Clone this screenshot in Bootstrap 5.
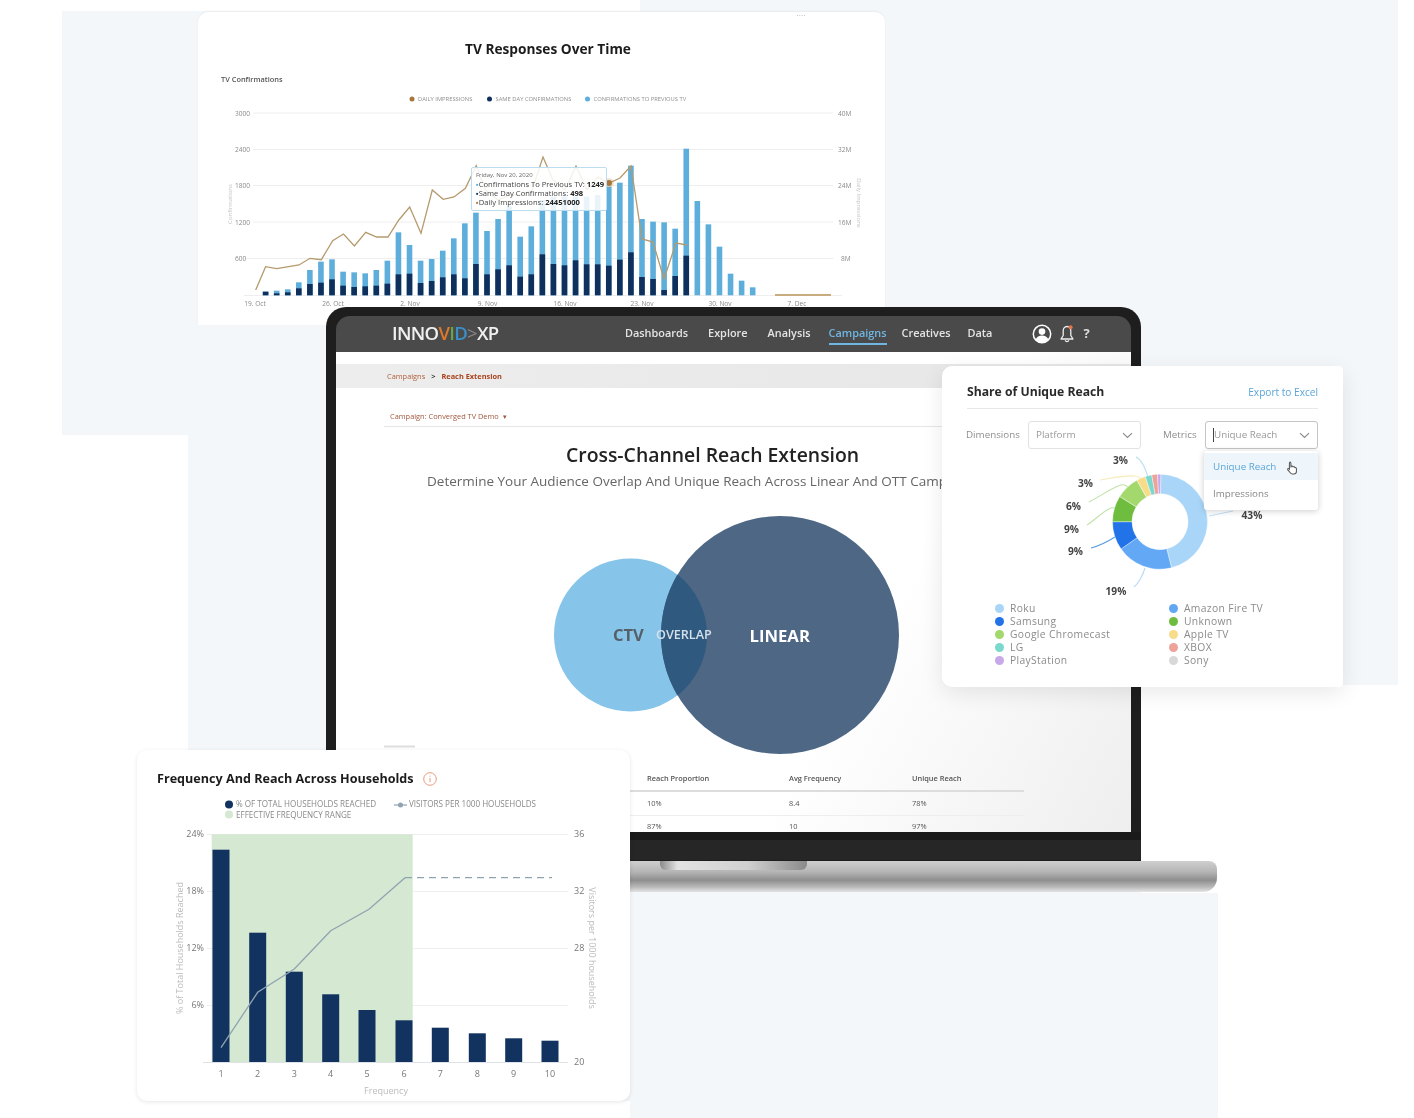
<!DOCTYPE html>
<html lang="en">
<head>
  <meta charset="UTF-8">
  <title>Innovid XP</title>
  <link href="https://cdn.jsdelivr.net/npm/bootstrap@5.3.0/dist/css/bootstrap.min.css" rel="stylesheet">
  <style>
    body { background: #fff; font-family: "Open Sans", "Liberation Sans", sans-serif; overflow: hidden; }
    .stage { position: relative; width: 1414px; height: 1118px; filter: blur(.6px); }
    .backdrop {
      position: absolute; inset: 0; background: #f3f7fa;
      clip-path: polygon(62px 11px, 640px 11px, 640px 0, 1398px 0, 1398px 685px, 1141px 685px, 1141px 893px, 1218px 893px, 1218px 1118px, 630px 1118px, 630px 1101px, 188px 1101px, 188px 435px, 62px 435px);
    }

    /* TV chart card */
    .tv-card { position: absolute; left: 198px; top: 12px; width: 687px; height: 313px; background: #fff; border-radius: 10px 10px 0 0; box-shadow: 0 -1px 2px rgba(0,0,0,.05); }
    .tv-title { padding: 28px 0 0 13px; font-size: 13.7px; line-height: 18px; font-weight: 700; color: #1c1c1c; text-align: center; margin: 0; }
    .tv-sub { margin: 15px 0 5px 23px; font-size: 7.4px; line-height: 12px; font-weight: 600; color: #555; }
    .tv-dots { position: absolute; right: 79px; top: 0; font-size: 7px; line-height: 8px; color: #999; letter-spacing: .5px; }
    .tv-tip { position: absolute; left: 273px; top: 155px; width: 136px; height: 44px; padding: 4px 4px; background: rgba(255,255,255,.86); border: 1px solid #bcdcef; border-radius: 2px; font-size: 7.6px; line-height: 8.9px; color: #444; white-space: nowrap; }
    .tv-tip small { display: block; font-size: 6px; line-height: 7px; color: #666; margin-bottom: 1px; }
    .tv-tip b { font-weight: 700; color: #222; }
    .mk-a { color: #5eaedc; } .mk-b { color: #0f2f5c; } .mk-c { color: #a8763a; }

    /* laptop */
    .lap-body { position: absolute; left: 326px; top: 307px; width: 815px; height: 554px; padding: 9px 10px 0; background: #1e1e1e; border-radius: 20px 20px 0 0; }
    .lap-head { height: 36px; padding-left: 56px; background: #4a4a4a; border-radius: 14px 14px 0 0; color: #e4e4e4; }
    .lap-logo { width: 233px; padding-bottom: 3px; font-size: 18.5px; font-weight: 600; letter-spacing: -.7px; color: #f0f0f0; }
    .lap-logo .v1 { color: #e0782a; } .lap-logo .v2 { color: #63a845; } .lap-logo .v3 { color: #3a8fc9; } .lap-logo .v4 { color: #8a8a8a; font-weight: 400; }
    .lap-nav { font-size: 10.9px; font-weight: 600; }
    .lap-nav span { display: block; padding: 0 0 2px; margin-right: 20px; line-height: 16px; }
    .lap-nav .on { margin-right: 15px; color: #6fb6e2; border-bottom: 2px solid #6fb6e2; margin-top: 2px; }
    .lap-nav .gap2 { margin-right: 18px; }
    .lap-nav .gap3 { margin-right: 17px; }
    .lap-icons { margin-left: 40px; gap: 7px; }
    .lap-help { margin-left: 1px; padding-bottom: 2px; font-size: 13px; font-weight: 700; line-height: 16px; color: #ddd; }
    .lap-screen { height: 480px; overflow: hidden; background: linear-gradient(120deg, #fff 65%, #eee 100%); padding-top: 12px; }
    .lap-band { height: 24px; padding: 2px 0 0 51px; background: linear-gradient(90deg, #ededed, #e6e6e6); font-size: 7.4px; color: #b0603c; }
    .lap-band b { color: #a8421c; font-weight: 700; }
    .lap-band i { font-style: normal; margin: 0 6px; color: #333; font-weight: 700; }
    .lap-camp { margin: 23px 0 0 48px; padding: 0 0 4px 6px; width: 560px; border-bottom: 1px solid #e4e6e8; font-size: 7.4px; line-height: 11px; color: #a0583c; }
    .lap-title { margin: 16px 0 0; padding-left: 230px; font-size: 19.4px; line-height: 24px; font-weight: 600; color: #222; }
    .lap-lead { margin: 4px 0 0; padding-left: 91px; font-size: 13.5px; line-height: 20px; color: #666; white-space: nowrap; }
    .venn { display: block; margin-top: 24px; }
    .venn text { font-weight: 700; }
    .venn-a { font-size: 16.5px; fill: #565f68; }
    .venn-b { font-size: 12.6px; fill: #d4e0ea; font-weight: 600 !important; }
    .venn-c { font-size: 16.7px; fill: #fff; }
    .lap-table { width: 640px; margin: 13px 0 0 48px; table-layout: fixed; font-size: 7.4px; color: #555; }
    .lap-table th, .lap-table td { padding: 0; height: 24px; background: transparent; color: #555; font-weight: 600; vertical-align: middle; }
    .lap-table th { border-bottom: 2px solid #ddd; height: 23px; }
    .lap-table td { border-bottom: 1px solid #eee; font-weight: 400; }
    .lap-chin { height: 28px; margin: 0 -10px; border-top: 8px solid #1a1a1a; background: #262626; }
    .lap-base { position: absolute; left: 249px; top: 861px; width: 968px; height: 31px; border-radius: 3px 8px 14px 14px; background: linear-gradient(180deg, #cfcfcf 0, #b5b5b5 35%, #8e8e8e 62%, #bcbcbc 85%, #e4e4e4 100%); }
    .lap-notch { width: 147px; height: 9px; margin: 0 auto; border-radius: 0 0 6px 6px; background: linear-gradient(90deg, #8a8a8a, #e2e2e2 12%, #d0d0d0 60%, #8a8a8a); }

    /* share of reach card */
    .share-card { position: absolute; left: 942px; top: 366px; width: 401px; height: 321px; padding: 17px 25px 0; background: #fff; border-radius: 10px 4px 4px 10px; box-shadow: 0 6px 22px rgba(0,0,0,.09); }
    .share-top { height: 26px; border-bottom: 1px solid #e8e8e8; }
    .share-title { font-size: 12.2px; font-weight: 700; color: #2a2a2a; }
    .share-link { margin-top: 2px; font-size: 10.1px; color: #5aa5d8; }
    .share-row { margin-top: 12px; font-size: 9.8px; color: #8e8e8e; }
    .share-lab { width: 62px; margin-left: -1px; }
    .share-lab2 { width: 42px; margin-left: 22px; }
    .pick { position: relative; width: 113px; height: 28px; padding: 0 7px; border: 1px solid #e2e2e2; border-radius: 3px; color: #999; }
    .pick-on { border-color: #c4c4c4; }
    .pick-caret { width: 1px; height: 14px; background: #444; }
    .pick-menu { left: -2px; top: 29px; width: 114px; min-width: 0; padding: 2px 0 3px; border: 0; border-radius: 3px; box-shadow: 0 1px 6px rgba(0,0,0,.2); font-size: 9.8px; margin: 0; }
    .pick-menu .dropdown-item { height: 27px; padding: 0 9px; line-height: 27px; color: #888; }
    .pick-menu .item-on { background: #eef6fc; color: #5aa5d8; position: relative; }
    .pick-hand { position: absolute; left: 81px; top: 7px; }
    .donut { display: block; margin: 2px -25px 0; }
    .donut text { font-size: 10.2px; font-weight: 700; fill: #444; }
    .share-keys { display: grid; grid-template-columns: 174px 174px; margin: 2px 0 0 28px; font-size: 10.3px; line-height: 13px; letter-spacing: .35px; color: #8b8b8b; }
    .share-keys span::before { content: ""; display: inline-block; width: 9px; height: 9px; margin-right: 6px; border-radius: 50%; background: var(--dot); vertical-align: -1px; }

    /* frequency card */
    .freq-card { position: absolute; left: 137px; top: 750px; width: 493px; height: 351px; padding: 20px 20px 0; background: #fff; border-radius: 10px; box-shadow: 0 1px 4px rgba(0,0,0,.1); }
    .freq-title { font-size: 12.6px; line-height: 18px; font-weight: 700; color: #1c1c1c; gap: 9px; margin: 0; }
    .freq-chart { display: block; margin: 5px -20px 0; }

    .t-tick { font-size: 6.6px; fill: #8a8a8a; }
    .t-key { font-size: 5.8px; fill: #909090; }
    .t-axis { font-size: 6px; fill: #c4c4c4; }
    .f-tick { font-size: 9px; fill: #777; }
    .f-key { font-size: 8.1px; fill: #8a8a8a; }
    .f-axis { font-size: 9px; fill: #bbb; }
  </style>
</head>
<body>
<div class="stage">
  <div class="backdrop"></div>

  <!-- TV responses -->
  <div class="tv-card">
    <span class="tv-dots">····</span>
    <h2 class="tv-title">TV Responses Over Time</h2>
    <p class="tv-sub">TV Confirmations</p>
    <svg id="tvChart" width="687" height="225" viewBox="198 90 687 225">
      <circle cx="412" cy="99" r="2.5" fill="#a8763a"/><text class="t-key" x="418" y="101">DAILY IMPRESSIONS</text>
      <circle cx="489.5" cy="99" r="2.5" fill="#0f2f5c"/><text class="t-key" x="495.5" y="101">SAME DAY CONFIRMATIONS</text>
      <circle cx="587.5" cy="99" r="2.5" fill="#5eaedc"/><text class="t-key" x="593.5" y="101">CONFIRMATIONS TO PREVIOUS TV</text>
      <g stroke="#eee" stroke-width="1">
        <line x1="253" x2="833" y1="113" y2="113"/><line x1="253" x2="833" y1="149.5" y2="149.5"/>
        <line x1="253" x2="833" y1="185.5" y2="185.5"/><line x1="253" x2="833" y1="222" y2="222"/>
        <line x1="245" x2="833" y1="258.5" y2="258.5"/><line x1="244" x2="842" y1="295.5" y2="295.5"/>
      </g>
      <text class="t-tick" x="235" y="115.5">3000</text><text class="t-tick" x="235" y="152">2400</text>
      <text class="t-tick" x="235" y="188">1800</text><text class="t-tick" x="235" y="224.5">1200</text>
      <text class="t-tick" x="235" y="261">600</text>
      <text class="t-tick" x="838" y="115.5">40M</text><text class="t-tick" x="838" y="152">32M</text>
      <text class="t-tick" x="838" y="188">24M</text><text class="t-tick" x="838" y="224.5">16M</text>
      <text class="t-tick" x="841" y="261">8M</text>
      <text class="t-tick" text-anchor="middle" x="255" y="306">19. Oct</text><text class="t-tick" text-anchor="middle" x="333" y="306">26. Oct</text>
      <text class="t-tick" text-anchor="middle" x="410" y="306">2. Nov</text><text class="t-tick" text-anchor="middle" x="487.5" y="306">9. Nov</text>
      <text class="t-tick" text-anchor="middle" x="565" y="306">16. Nov</text><text class="t-tick" text-anchor="middle" x="642" y="306">23. Nov</text>
      <text class="t-tick" text-anchor="middle" x="720" y="306">30. Nov</text><text class="t-tick" text-anchor="middle" x="797" y="306">7. Dec</text>
      <text class="t-axis" text-anchor="middle" transform="translate(232 204) rotate(-90)">Confirmations</text>
      <text class="t-axis" text-anchor="middle" transform="translate(857 203) rotate(90)">Daily Impressions</text>
      <line x1="775" x2="831" y1="295" y2="295" stroke="#c9ab80" stroke-width="2"/>
    </svg>
    <div class="tv-tip">
      <small>Friday, Nov 20, 2020</small>
      <div><span class="mk-a">▪</span>Confirmations To Previous TV: <b>1249</b></div>
      <div><span class="mk-b">▪</span>Same Day Confirmations: <b>498</b></div>
      <div><span class="mk-c">▪</span>Daily Impressions: <b>24451000</b></div>
    </div>
  </div>

  <!-- laptop -->
  <div class="lap-base"><div class="lap-notch"></div></div>
  <div class="lap-body">
    <div class="lap-head d-flex align-items-center">
      <div class="lap-logo">INNO<span class="v1">V</span><span class="v2">I</span><span class="v3">D</span><span class="v4">&gt;</span>XP</div>
      <div class="lap-nav d-flex align-items-center">
        <span>Dashboards</span><span>Explore</span><span class="gap2">Analysis</span><span class="on">Campaigns</span><span class="gap3">Creatives</span><span class="m-0">Data</span>
      </div>
      <div class="lap-icons d-flex align-items-center">
        <svg class="d-block" width="20" height="20" viewBox="0 0 20 20"><circle cx="10" cy="10" r="8.7" fill="none" stroke="#fff" stroke-width="1.5"/><circle cx="10" cy="7.6" r="3.3" fill="#fff"/><path d="M3.6 15.6c1-3 3.6-4.2 6.4-4.2s5.400 1.200 6.400 4.200A8.700 8.700 0 0 1 10 18.700a8.700 8.700 0 0 1-6.400-3.100z" fill="#fff"/></svg>
        <svg class="d-block" width="16" height="20" viewBox="0 0 16 20"><path d="M8 2.500c-2.600 0-3.800 2-3.800 4.400v4.600L2 15h12l-2.200-3.500V6.900C11.800 4.500 10.600 2.500 8 2.500z" fill="none" stroke="#eee" stroke-width="1.300" stroke-linejoin="round"/><path d="M6.200 16.300a1.900 1.900 0 0 0 3.600 0" fill="none" stroke="#eee" stroke-width="1.300"/><circle cx="11.600" cy="3.300" r="2" fill="#e8744a"/></svg>
        <span class="lap-help">?</span>
      </div>
    </div>
    <div class="lap-screen">
      <div class="lap-band d-flex align-items-center"><span>Campaigns</span><i>&gt;</i><b>Reach Extension</b></div>
      <div class="lap-camp">Campaign: Converged TV Demo &nbsp;▾</div>
      <h1 class="lap-title">Cross-Channel Reach Extension</h1>
      <p class="lap-lead">Determine Your Audience Overlap And Unique Reach Across Linear And OTT Campaigns</p>
      <svg class="venn" width="794" height="240" viewBox="336 515 794 240">
        <line x1="384" x2="415" y1="746.500" y2="746.500" stroke="#ddd" stroke-width="2"/>
        <circle cx="630.500" cy="635" r="76.500" fill="#86c5e9"/>
        <circle cx="780" cy="635" r="119" fill="#4d6785"/>
        <path d="M677.460 574.600A76.500 76.500 0 0 1 677.460 695.400A119 119 0 0 1 677.460 574.600z" fill="#30597f"/>
        <text class="venn-a" x="613" y="641">CTV</text>
        <text class="venn-b" x="656" y="638.500">OVERLAP</text>
        <text class="venn-c" x="749.500" y="641.500">LINEAR</text>
      </svg>
      <table class="table lap-table mb-0">
        <colgroup><col style="width:263px"><col style="width:142px"><col style="width:123px"><col></colgroup>
        <thead><tr><th></th><th>Reach Proportion</th><th>Avg Frequency</th><th>Unique Reach</th></tr></thead>
        <tbody>
          <tr><td></td><td>10%</td><td>8.4</td><td>78%</td></tr>
          <tr><td></td><td>87%</td><td>10</td><td>97%</td></tr>
        </tbody>
      </table>
    </div>
    <div class="lap-chin"></div>
  </div>

  <!-- share of unique reach -->
  <div class="share-card">
    <div class="share-top d-flex justify-content-between align-items-start">
      <span class="share-title">Share of Unique Reach</span>
      <span class="share-link">Export to Excel</span>
    </div>
    <div class="share-row d-flex align-items-center">
      <span class="share-lab">Dimensions</span>
      <div class="pick d-flex align-items-center justify-content-between">
        <span>Platform</span>
        <svg width="11" height="7" viewBox="0 0 11 7"><path d="M1 1.200l4.500 4.300 4.500-4.300" fill="none" stroke="#888" stroke-width="1.100"/></svg>
      </div>
      <span class="share-lab2">Metrics</span>
      <div class="pick pick-on d-flex align-items-center justify-content-between">
        <span class="d-flex align-items-center"><span class="pick-caret"></span>Unique Reach</span>
        <svg width="11" height="7" viewBox="0 0 11 7"><path d="M1 1.200l4.500 4.300 4.500-4.300" fill="none" stroke="#888" stroke-width="1.100"/></svg>
        <div class="dropdown-menu show pick-menu">
          <div class="dropdown-item item-on">Unique Reach
            <svg class="pick-hand" width="15" height="17" viewBox="0 0 16 17"><path d="M5 1.500c.8 0 1.300.6 1.300 1.300V7h.2v-.6c0-.6 1.900-.7 2 .1v.6c.2-.7 1.900-.6 2 .2v.6c.3-.6 1.700-.4 1.700.5v3c0 1.800-1 3-2.800 3H8c-1.300 0-1.900-.6-2.600-1.600L3 10c-.7-1 .5-1.900 1.300-1.200l.4.4V2.800c0-.7.5-1.300 1.300-1.300z" fill="#fff" stroke="#555" stroke-width="1.100"/></svg>
          </div>
          <div class="dropdown-item">Impressions</div>
        </div>
      </div>
    </div>
    <svg id="donut" class="donut" width="401" height="149" viewBox="942 451 401 149">
      <g fill="none" stroke-width="1.100">
        <path d="M1136 457c6 3 9 11 12 20" stroke="#b7def0"/>
        <path d="M1100 480c12-2 24-5 35-4 4 0 6 3 7 6" stroke="#f7eab8"/>
        <path d="M1089 502c10-5 22-14 32-17 4-1 6 1 7 3" stroke="#bfe2a6"/>
        <path d="M1087 525c8-5 16-14 24-17 3-1 4 0 6 1" stroke="#bfe2a6"/>
        <path d="M1091 548c8-2 16-6 24-11" stroke="#5a9ce0"/>
        <path d="M1134 587c4-3 9-12 11-19" stroke="#b7d8f4"/>
        <path d="M1209 516l24-5" stroke="#c4e2f8"/>
      </g>
      <text x="1113" y="464">3%</text><text x="1078" y="487">3%</text><text x="1066" y="510">6%</text>
      <text x="1064" y="533">9%</text><text x="1068" y="555">9%</text><text x="1105.500" y="595">19%</text><text x="1241.500" y="519">43%</text>
    </svg>
    <div class="share-keys">
      <span style="--dot:#a9d6f8">Roku</span><span style="--dot:#62a8f0">Amazon Fire TV</span>
      <span style="--dot:#2272e8">Samsung</span><span style="--dot:#6fbd3e">Unknown</span>
      <span style="--dot:#a2d86c">Google Chromecast</span><span style="--dot:#f7dc8a">Apple TV</span>
      <span style="--dot:#7ad8cd">LG</span><span style="--dot:#eda29a">XBOX</span>
      <span style="--dot:#c8a8e8">PlayStation</span><span style="--dot:#d8d8d8">Sony</span>
    </div>
  </div>

  <!-- frequency and reach -->
  <div class="freq-card">
    <h3 class="freq-title d-flex align-items-center">Frequency And Reach Across Households
      <svg width="14" height="14" viewBox="0 0 14 14"><circle cx="7" cy="7" r="6.300" fill="none" stroke="#e89a7c" stroke-width="1"/><path d="M7 6v4.200M7 3.700v1" stroke="#e89a7c" stroke-width="1"/></svg>
    </h3>
    <svg id="freqChart" class="freq-chart" width="493" height="308" viewBox="137 793 493 308">
      <circle cx="229" cy="804.500" r="4" fill="#12335f"/><text class="f-key" x="236" y="807">% OF TOTAL HOUSEHOLDS REACHED</text>
      <line x1="394" x2="407" y1="805" y2="805" stroke="#8fa3b0" stroke-width="1.200"/><circle cx="400.500" cy="805" r="2.500" fill="#8fa3b0"/><text class="f-key" x="409" y="807">VISITORS PER 1000 HOUSEHOLDS</text>
      <circle cx="229" cy="814.500" r="4" fill="#d5e8d2"/><text class="f-key" x="236" y="817.500">EFFECTIVE FREQUENCY RANGE</text>
      <g stroke="#eee" stroke-width="1">
        <line x1="207" x2="568" y1="834.500" y2="834.500"/><line x1="207" x2="568" y1="891.500" y2="891.500"/>
        <line x1="207" x2="568" y1="948.500" y2="948.500"/><line x1="207" x2="568" y1="1005.500" y2="1005.500"/>
      </g>
      <rect x="211.700" y="834.300" width="201" height="228" fill="#d5e8d2"/>
      <line x1="203" x2="568" y1="1062.500" y2="1062.500" stroke="#dfe3e8"/>
      <text class="f-tick" text-anchor="end" x="204" y="837">24%</text><text class="f-tick" text-anchor="end" x="204" y="894">18%</text>
      <text class="f-tick" text-anchor="end" x="204" y="951">12%</text><text class="f-tick" text-anchor="end" x="204" y="1008">6%</text>
      <text class="f-tick" x="574" y="837">36</text><text class="f-tick" x="574" y="894">32</text>
      <text class="f-tick" x="574" y="951">28</text><text class="f-tick" x="574" y="1065">20</text>
      <text class="f-axis" text-anchor="middle" x="386" y="1094">Frequency</text>
      <text class="f-axis" text-anchor="middle" transform="translate(183 948) rotate(-90)">% of Total Households Reached</text>
      <text class="f-axis" text-anchor="middle" transform="translate(589 948) rotate(90)">Visitors per 1000 households</text>
    </svg>
  </div>
</div>

<script src="https://cdn.jsdelivr.net/npm/bootstrap@5.3.0/dist/js/bootstrap.bundle.min.js"></script>
<script>
  const NS = "http://www.w3.org/2000/svg";
  function add(svg, tag, attrs, text) {
    const el = document.createElementNS(NS, tag);
    for (const k in attrs) el.setAttribute(k, attrs[k]);
    if (text !== undefined) el.textContent = text;
    svg.appendChild(el);
    return el;
  }

  // TV chart: [total top, dark top] read off the chart, y in page px x3
  const tvBars = [[875,875],[872,880],[868,877],[847,865],[810,852],[785,848],[778,838],[815,857],[817,861],[820,859],[810,857],[782,851],[697,823],[735,821],[782,849],[777,843],[752,832],[715,823],[670,835],[638,792],[693,823],[657,808],[620,796],[710,830],[679,823],[600,763],[590,792],[590,796],[590,781],[590,793],[585,793],[560,797],[548,779],[497,757],[657,831],[665,837],[667,870],[686,828],[446,767],[603,886],[673,886],[740,886],[821,886],[842,886],[862,886]];
  const tv = document.getElementById("tvChart");
  tvBars.forEach(function (b, i) {
    const x = 262.800 + 11.070 * i, top = b[0] / 3, mid = b[1] / 3;
    add(tv, "rect", { x: x, y: top, width: 5.600, height: 295.300 - top, fill: "#5eaedc" });
    add(tv, "rect", { x: x, y: mid, width: 5.600, height: 295.300 - mid, fill: "#0f2f5c" });
  });
  const tvLine = [[255.700,290],[265.600,266.700],[276.700,268.700],[288.700,266.700],[299,265],[310,258.300],[321.300,259.700],[332.700,240.700],[343.500,234],[354.400,246],[365.700,232.300],[376.600,237],[388,237],[398.800,220],[409.700,207],[421,233.300],[432.300,190],[443.200,199.300],[454,197],[465.400,188.300],[476.200,165.700],[485.600,190],[498,200],[510,195],[520,195],[532,190],[543,157],[553,180],[565,190],[576,166],[587,190],[598,177],[609,183],[620,178],[631,166],[642,239],[653,242],[664,279],[676,243],[687,245]];
  add(tv, "polyline", { points: tvLine.join(" "), fill: "none", stroke: "#b59a6d", "stroke-width": 1.300 });
  add(tv, "circle", { cx: 609, cy: 183, r: 5, fill: "#a8763a", opacity: .2 });
  add(tv, "circle", { cx: 609, cy: 183, r: 3, fill: "#a8763a" });

  // donut
  const donut = document.getElementById("donut");
  const parts = [[0,165,"#a9d6f8"],[165,234,"#62a8f5"],[234,269,"#2272e8"],[269,301,"#6fbd3e"],[301,330,"#a2d86c"],[330,341,"#f7dc8a"],[341,349,"#7ad8cd"],[349,356,"#eda29a"],[356,360,"#c8a8e8"]];
  const pt = function (a, r) {
    const t = (a - 90 + 1) * Math.PI / 180;
    return [(1160 + r * Math.cos(t)).toFixed(2), (521.700 + r * Math.sin(t)).toFixed(2)];
  };
  parts.forEach(function (p) {
    const big = p[1] - p[0] > 180 ? 1 : 0, R = 47.500, r = 28;
    const d = "M" + pt(p[0], R) + "A" + R + " " + R + " 0 " + big + " 1 " + pt(p[1], R) +
      "L" + pt(p[1], r) + "A" + r + " " + r + " 0 " + big + " 0 " + pt(p[0], r) + "Z";
    add(donut, "path", { d: d, fill: p[2], stroke: "#fff", "stroke-width": .400 });
  });

  // frequency chart
  const freq = document.getElementById("freqChart");
  const centers = [221,257.700,294.300,330.700,367,404,440.300,477.300,513.700,550];
  const tops = [849.700,932.700,971.700,994.300,1010,1020.300,1027.700,1033.300,1038.300,1040.700];
  centers.forEach(function (x, i) {
    add(freq, "rect", { x: x - 8.500, y: tops[i], width: 17, height: 1062 - tops[i], fill: "#12335f" });
    add(freq, "text", { class: "f-tick", "text-anchor": "middle", x: x, y: 1077 }, i + 1);
  });
  add(freq, "polyline", { points: "221,1047.700 257.700,992.300 294.300,969 330.700,930.700 369,909.300 405,877.700", fill: "none", stroke: "#8fa3b0", "stroke-width": 1.300 });
  add(freq, "line", { x1: 405, x2: 552, y1: 877.700, y2: 877.700, stroke: "#8fa3b0", "stroke-width": 1.200, "stroke-dasharray": "7 5" });
</script>
</body>
</html>
